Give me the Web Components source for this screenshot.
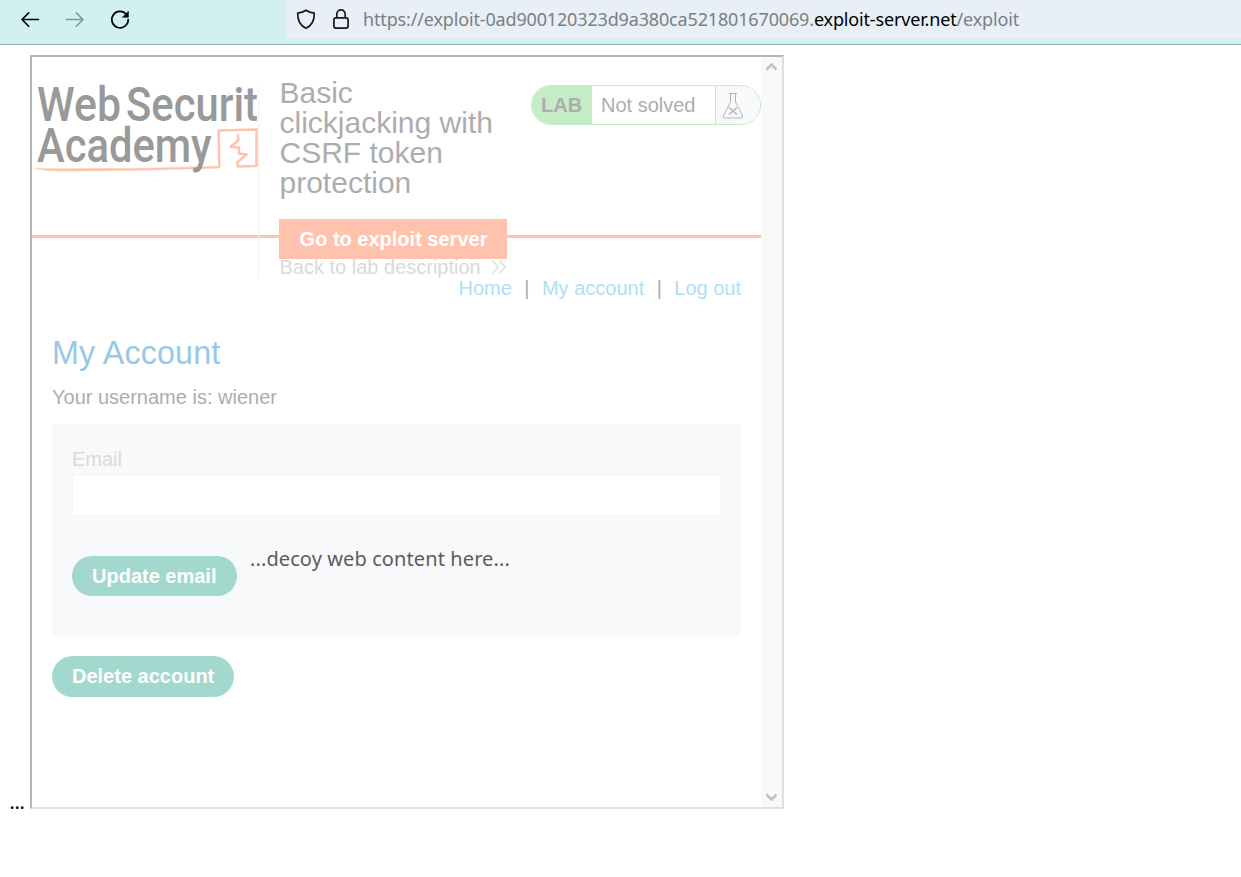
<!DOCTYPE html>
<html lang="en">
<head>
<meta charset="utf-8">
<title>Exploit</title>
<style>
html,body{margin:0;height:100%;background:#fff;overflow:hidden}
body{font-family:"Liberation Sans",Arial,sans-serif;font-size:20px}
</style>
</head>
<body>
<exploit-page></exploit-page>
<script>
const define=(name,html)=>customElements.define(name,class extends HTMLElement{
  constructor(){super();this.attachShadow({mode:'open'}).innerHTML=html;}
});

define('browser-bar',`<style>
:host{display:flex;height:44px;box-sizing:content-box;background:#d2eff2;border-bottom:1px solid #93abad;align-items:flex-start}
.nav{display:flex;width:286px;height:39px;align-items:center;padding-left:19px;box-sizing:border-box;gap:23px;flex:none}
svg{display:block;flex:none}
.nav svg{margin-top:-1px}
.url{flex:1;height:39px;background:#e8eff6;border-radius:5px 0 0 5px;display:flex;align-items:center;padding-left:9px;box-sizing:border-box;color:#7b7f83}
.url svg{margin-top:-1px}
.url svg+svg{margin-left:13px}
.text{font:18px/38px "Noto Sans","Open Sans",sans-serif;margin:-1px 0 0 11px;white-space:pre;display:flex}
.a{letter-spacing:-.155px}.b{color:#000;letter-spacing:-.16px}
</style>
<div class="nav">
<svg width="22" height="22" viewBox="0 0 22 22" fill="none" stroke="#000" stroke-width="1.6" stroke-linecap="round" stroke-linejoin="round"><path d="M19.5 11.5H3M9.7 4.9 3 11.5l6.700 6.800"/></svg>
<svg width="22" height="22" viewBox="0 0 22 22" fill="none" stroke="#839698" stroke-width="1.6" stroke-linecap="round" stroke-linejoin="round"><path d="M2.500 11.500H19M12.300 4.900 19 11.500l-6.700 6.800"/></svg>
<svg width="22" height="22" viewBox="0 0 22 22" fill="none" stroke="#000" stroke-width="1.7" stroke-linecap="round"><path d="M17.400 6.500A8.200 8.200 0 1 0 19.200 11.500"/><path d="M19.400 3.500v5.700h-5.700z" fill="#000" stroke-width=".6"/></svg>
</div>
<div class="url">
<svg width="22" height="22" viewBox="0 0 22 22" fill="none" stroke="#17191c" stroke-width="1.7" stroke-linejoin="round"><path d="M11 2.200C8.500 4 5.500 4.800 2.700 5.100 2.600 11.500 4.500 17.500 11 20.300 17.500 17.500 19.400 11.500 19.300 5.100 16.500 4.800 13.500 4 11 2.200Z"/></svg>
<svg width="22" height="22" viewBox="0 0 22 22" fill="none" stroke="#17191c" stroke-width="1.700"><rect x="3.900" y="9.900" width="14.200" height="10.200" rx="2"/><path d="M6.800 9.900V6.100a4.200 4.200 0 0 1 8.400 0v3.800"/></svg>
<div class="text"><span class="a">https://exploit-0ad900120323d9a380ca521801670069.</span><span class="b">exploit-server.net</span><span class="a">/exploit</span></div>
</div>`);

define('academy-logo',`<style>:host{display:block;width:227px;height:194px;flex:none;border-right:1px solid #f3f3f3;box-sizing:border-box}svg{display:block;overflow:visible}</style>
<svg width="226" height="100" viewBox="0 0 226 100">
<g fill="none" stroke="#ffc2ad" stroke-linejoin="round"><path d="M2.500 83.500Q12 86 35 86 100 85.800 187.500 83L187.500 81.200Q100 84 60 83.400 20 84 2.500 83.500Z" fill="#ffc2ad" stroke-width=".5"/><path d="M187.300 82.200L186.600 45.400 224.500 44.600 224.400 81 205.800 81.600 205.200 77.400 214.600 69.600 206.900 68.400 207.100 62.800 198.700 61.700 206.200 55.500 206.200 49.500" stroke-width="2.500"/></g>
<g fill="#999" font-family="Roboto,sans-serif" font-weight="500">
<text x="5" y="36" font-size="48" textLength="84" lengthAdjust="spacingAndGlyphs">Web</text>
<text x="94" y="36" font-size="48" textLength="132" lengthAdjust="spacingAndGlyphs">Securit</text>
<text x="5" y="76.700" font-size="48" textLength="174.500" lengthAdjust="spacingAndGlyphs">Academy</text></g>
</svg>`);

define('lab-status',`<style>
:host{display:flex;box-sizing:border-box;width:230px;height:40px;border:1px solid #c5edc5;border-radius:20px;overflow:hidden;color:#adadad;line-height:38px}
b{width:60px;background:#c5edc5;padding-left:9px;box-sizing:border-box}
span{width:124px;padding-left:9px;box-sizing:border-box;border-right:1px solid #c5edc5}
i{flex:1;background:#f8f9fb}svg{display:block;margin:6px 0 0 6px}
</style><b>LAB</b><span>Not solved</span><i><svg width="22" height="28" viewBox="0 0 22 28" fill="none" stroke="#b5b5b5"><path d="M7 1.500h8M8.500 2v8L1.500 23.500q-1 2.500 1.500 2.500h16q2.500 0 1.500-2.500L13.500 10V2" stroke-width="1"/><path d="M7 15.500l8 7M15 15.500l-8 7" stroke-width="1.500"/></svg></i>`);

define('lab-header',`<style>
:host{display:flex;height:222px;background:linear-gradient(#ffc2ad,#ffc2ad) 0 178px/100% 3px no-repeat}
academy-logo{margin-top:28px}
.mid{width:228px;margin-left:20px;flex:none}
h2{font-weight:400;font-size:30px;line-height:30px;color:#adadad;margin:21px 0 0;padding-left:.5px}
.go{display:block;background:#ffc2ad;color:#fff;font-weight:700;line-height:40px;height:40px;margin-top:21px;text-align:center;padding-left:1px;box-sizing:border-box;position:relative}
.back{display:flex;color:#dadada;line-height:20px;margin-top:-2px;padding-left:.5px;align-items:center;gap:10.500px;white-space:nowrap}
lab-status{margin:28px 0 0 24px;flex:none}
</style>
<academy-logo></academy-logo>
<div class="mid"><h2>Basic<br>clickjacking with<br>CSRF token<br>protection</h2><a class="go">Go to exploit server</a>
<div class="back"><span>Back to lab description</span><svg width="16" height="16" viewBox="0 0 16 16" fill="none" stroke="#dadada" stroke-width="1.200"><path d="M1.500 1.500l6 6.500-6 6.500M8.500 1.500l6 6.500-6 6.500"/></svg></div></div>
<lab-status></lab-status>`);

define('pill-button',`<style>:host{display:block;width:max-content;background:#a2d8cd;color:#fff;font-weight:700;line-height:40px;padding:0 20px;border-radius:21px}</style><slot></slot>`);

define('account-panel',`<style>
:host{display:block;padding:0 20px}
nav{display:flex;justify-content:flex-end;color:#ababab;line-height:20px;margin-top:-1px;gap:12.450px}
nav a{color:#addff5}
h1{font-weight:400;font-size:32.300px;line-height:36px;letter-spacing:.15px;color:#99c7e6;margin:37px 0 0}
p{margin:16px 0 0;line-height:20px;color:#adadad}
form{display:block;background:#f8f9fb;height:212px;margin:17px 0 20px;padding:25px 20px 0;box-sizing:border-box}
label{display:block;line-height:20px;color:#dadada}
.in{height:41px;border:1px solid #f4f5f6;box-sizing:border-box;background:#fff;margin:6px 0 40px}
form pill-button{padding-right:20.600px}
</style>
<nav><a>Home</a><span>|</span><a>My account</a><span>|</span><a>Log out</a></nav>
<h1>My Account</h1><p>Your username is: wiener</p>
<form><label>Email</label><div class="in"></div><pill-button>Update email</pill-button></form>
<pill-button style="line-height:41px">Delete account</pill-button>`);

define('frame-scrollbar',`<style>:host{display:flex;flex-direction:column;justify-content:space-between;align-items:center;width:21px;background:#f9f9f9;padding:4px 0;box-sizing:border-box;flex:none}svg{display:block}</style>
<svg width="13" height="12" viewBox="0 0 13 12" fill="none" stroke="#c1c1c1" stroke-width="2.600"><path d="M1.500 8.500l5-5 5 5"/></svg>
<svg width="13" height="12" viewBox="0 0 13 12" fill="none" stroke="#c1c1c1" stroke-width="2.600"><path d="M1.500 3.500l5 5 5-5"/></svg>`);

define('victim-frame',`<style>:host{display:flex;width:754px;height:754px;box-sizing:border-box;border:2px solid;border-color:#b5b5b5 #dfdfdf #dfdfdf #b5b5b5}.c{flex:1;min-width:0}</style>
<div class="c"><slot></slot></div><frame-scrollbar></frame-scrollbar>`);

define('exploit-page',`<style>
:host{display:block;height:877px;position:relative}
main{display:flex;padding:10px 0 0 10px;align-items:flex-end}
.dots{width:20px;font:20px/27px "Noto Sans",sans-serif;color:#000;flex:none;margin-bottom:-6px;letter-spacing:-.4px;text-indent:-.5px}
.decoy{position:absolute;left:250px;top:545px;font:20px/27px "Noto Sans",sans-serif;letter-spacing:.1px;color:#5c5c5c;white-space:nowrap}
</style>
<browser-bar></browser-bar>
<main><span class="dots">...</span><victim-frame><lab-header></lab-header><account-panel></account-panel></victim-frame></main>
<div class="decoy">...decoy web content here...</div>`);
</script>
</body>
</html>
